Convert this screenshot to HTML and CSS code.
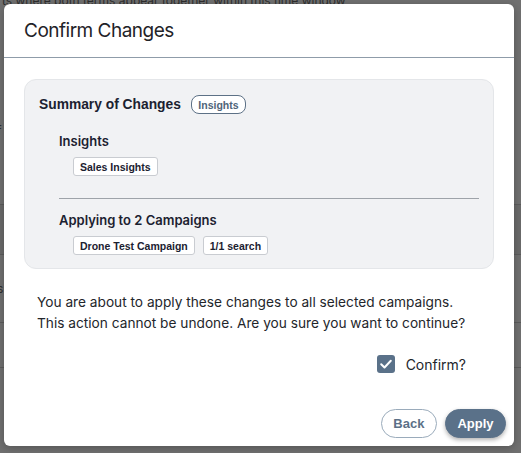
FILE: index.html
```html
<!DOCTYPE html>
<html lang="en">
<head>
<meta charset="utf-8">
<title>Confirm Changes</title>
<link rel="stylesheet" href="styles.css">
</head>
<body>
<div class="page">
  <p class="page-text">ts where both terms appear together within this time window</p>
  <div class="page-row r1"><span class="page-frag">f</span></div>
  <div class="page-row r2"></div>
  <div class="page-row r3"><span class="page-frag">s</span></div>
  <div class="page-row r4"></div>
</div>
<div class="overlay">
  <div class="modal">
    <div class="modal-header">
      <h1 class="modal-title">Confirm Changes</h1>
    </div>
    <div class="modal-body">
      <div class="summary">
        <div class="summary-head">
          <span class="summary-title">Summary of Changes</span>
          <span class="badge">Insights</span>
        </div>
        <div class="section section-first">
          <div class="section-label">Insights</div>
          <div class="chips"><span class="chip">Sales Insights</span></div>
        </div>
        <hr class="divider">
        <div class="section">
          <div class="section-label">Applying to 2 Campaigns</div>
          <div class="chips"><span class="chip">Drone Test Campaign</span><span class="chip">1/1 search</span></div>
        </div>
      </div>
      <p class="message">You are about to apply these changes to all selected campaigns. This action cannot be undone. Are you sure you want to continue?</p>
      <label class="confirm">
        <span class="checkbox"><svg viewBox="0 0 18 18" width="18" height="18"><path d="M4.2 9.3 L7.5 12.5 L13.8 5.8" fill="none" stroke="#fff" stroke-width="2" stroke-linecap="round" stroke-linejoin="round"/></svg></span>
        <span class="confirm-text">Confirm?</span>
      </label>
    </div>
    <div class="modal-footer">
      <button class="btn btn-outline">Back</button>
      <button class="btn btn-primary">Apply</button>
    </div>
  </div>
</div>
</body>
</html>
```
FILE: styles.css
```css
* { box-sizing: border-box; }
html, body { margin: 0; padding: 0; }
body {
  width: 521px;
  height: 453px;
  overflow: hidden;
  background: #707070;
  font-family: Inter, "Liberation Sans", sans-serif;
  position: relative;
}
.page { height: 453px; }
.page-text {
  margin: 0;
  font-size: 12px;
  line-height: 12px;
  margin-top: -5px;
  padding-left: 2px;
  color: #2e2e2e;
  white-space: nowrap;
}
.page-row {
  border-bottom: 1px solid #5c5c5c;
  height: 60px;
  font-size: 12px;
  color: #2e2e2e;
}
.r1 { height: 198px; display: flex; align-items: flex-end; padding-bottom: 66px; }
.r2 { height: 50px; background: #6a6a6a; }
.r3 { height: 68px; display: flex; align-items: center; }
.r4 { height: 45px; }
.page-frag { display: block; margin-left: -3px; }

.overlay {
  position: absolute;
  inset: 0;
  padding: 4px 7px 7px 4px;
  display: flex;
}
.modal {
  flex: 1;
  background: #fff;
  border-radius: 6px;
  display: flex;
  flex-direction: column;
  box-shadow: 0 2px 8px rgba(0,0,0,0.25);
}
.modal-header {
  height: 54px;
  padding: 0 20px;
  display: flex;
  align-items: center;
  border-bottom: 1px solid #8f9ca9;
}
.modal-title {
  margin: 0;
  font-size: 19px;
  font-weight: 400;
  color: #1f2328;
  letter-spacing: -0.5px;
}
.modal-body {
  padding: 21px 20px 0;
  flex: 1;
}
.summary {
  background: #f1f2f4;
  border: 1px solid #e4e6e9;
  border-radius: 12px;
  padding: 15px 14px 13px 14px;
}
.summary-head {
  display: flex;
  align-items: center;
  gap: 10px;
  height: 19px;
}
.summary-title {
  font-family: "Liberation Sans", Arial, sans-serif;
  font-weight: 700;
  font-size: 13.8px;
  color: #1b2130;
}
.badge {
  font-family: "Liberation Sans", Arial, sans-serif;
  font-weight: 700;
  font-size: 10.5px;
  color: #4f6479;
  border: 1px solid #5d7186;
  border-radius: 8px;
  height: 19px;
  padding: 0 6.5px;
  display: inline-flex;
  align-items: center;
  background: #fff;
}
.section { padding-left: 20px; }
.section-first { margin-top: 19px; }
.section-label {
  font-weight: 600;
  font-size: 13px;
  color: #1b2130;
  line-height: 16px;
}
.chips {
  display: flex;
  gap: 8px;
  padding-left: 14px;
  margin-top: 8px;
}
.chip {
  font-family: "Liberation Sans", Arial, sans-serif;
  font-weight: 700;
  font-size: 10.5px;
  color: #1b2130;
  background: #fff;
  border: 1px solid #c9ccd1;
  border-radius: 3px;
  height: 19px;
  padding: 0 6px;
  display: inline-flex;
  align-items: center;
}
.divider {
  border: 0;
  border-top: 1px solid #9ea3a9;
  margin: 22px 0 13px 20px;
}
.message {
  margin: 23px 0 0;
  padding: 0 13px;
  font-size: 13.7px;
  line-height: 21px;
  color: #23262b;
}
.confirm {
  display: flex;
  justify-content: flex-end;
  align-items: center;
  gap: 11px;
  margin-top: 21px;
  padding-right: 28px;
}
.checkbox {
  width: 18px;
  height: 18px;
  border-radius: 3px;
  background: #5a7189;
  display: inline-flex;
}
.confirm-text {
  font-size: 14px;
  color: #23262b;
}
.modal-footer {
  display: flex;
  justify-content: flex-end;
  gap: 8px;
  padding: 0 8px 8px;
}
.btn {
  font-family: "Liberation Sans", Arial, sans-serif;
  font-weight: 700;
  font-size: 13px;
  height: 29px;
  border-radius: 15px;
  padding: 0 11.5px;
  cursor: pointer;
}
.btn-outline {
  background: #fff;
  color: #5b7087;
  border: 1px solid #9aabbb;
}
.btn-primary {
  background: #5a7189;
  color: #fff;
  border: 1px solid #5a7189;
  padding: 0 11.5px;
  box-shadow: 0 2px 4px rgba(0,0,0,0.3);
}
```
